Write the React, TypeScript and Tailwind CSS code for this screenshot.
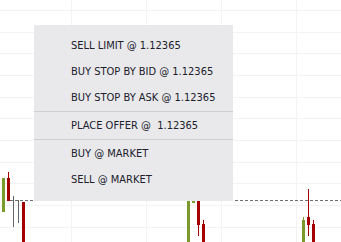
import React from 'react'

type Candle = { x: number; top: number; bottom: number; wickTop?: number; wickBottom?: number; color: string }

const GREEN = '#7a9a2c'
const RED = '#a50000'

const CANDLES: Candle[] = [
  { x: 2, top: 178, bottom: 212, color: GREEN },
  { x: 7, top: 178, bottom: 201, wickTop: 172, color: RED },
  { x: 22, top: 202, bottom: 242, color: RED },
  { x: 187, top: 195, bottom: 242, color: GREEN },
  { x: 192, top: 201, bottom: 203, color: GREEN },
  { x: 197, top: 195, bottom: 225, wickBottom: 236, color: RED },
  { x: 202, top: 224, bottom: 242, wickTop: 220, color: RED },
  { x: 302, top: 220, bottom: 242, wickTop: 217, color: GREEN },
  { x: 307, top: 217, bottom: 225, wickTop: 189, wickBottom: 236, color: RED },
  { x: 312, top: 224, bottom: 242, wickTop: 220, color: RED },
]

const H_LINES = [10, 32, 53, 75, 97, 118, 140, 162, 183, 205, 227]
const V_LINES = [71, 146, 221, 296]

function Chart() {
  return (
    <svg className="absolute inset-0" width={341} height={242} viewBox="0 0 341 242">
      {H_LINES.map((y) => (
        <rect key={`h${y}`} x={0} y={y} width={341} height={1} fill="#f3f3f3" />
      ))}
      {V_LINES.map((x) => (
        <rect key={`v${x}`} x={x} y={0} width={1} height={242} fill="#f3f3f3" />
      ))}
      <line x1={10} y1={200.5} x2={341} y2={200.5} stroke="#707070" strokeWidth={1} strokeDasharray="3 2" />
      <rect x={13} y={196} width={1} height={31} fill="#666" />
      <rect x={18} y={200} width={1} height={23} fill="#666" />
      {CANDLES.map((c, i) => (
        <g key={i} fill={c.color}>
          {c.wickTop !== undefined && <rect x={c.x + 1} y={c.wickTop} width={1} height={c.top - c.wickTop} />}
          {c.wickBottom !== undefined && <rect x={c.x + 1} y={c.bottom} width={1} height={c.wickBottom - c.bottom} />}
          <rect x={c.x} y={c.top} width={3} height={c.bottom - c.top} />
        </g>
      ))}
    </svg>
  )
}

function Item({ label }: { label: string }) {
  return (
    <div className="flex h-[26px] items-center whitespace-pre pl-[37px] text-[11px] text-[#20202c]">
      {label}
    </div>
  )
}

function Separator() {
  return <div className="mb-px h-px bg-[#cfcfd2]" />
}

export default function App() {
  return (
    <div className="relative h-[242px] w-[341px] overflow-hidden bg-white font-['DejaVu_Sans_Condensed','DejaVu_Sans',sans-serif]">
      <Chart />
      <div className="absolute left-[34px] top-[25px] flex h-[176px] w-[199px] flex-col bg-[#e9e9eb] py-2">
        <Item label="SELL LIMIT @ 1.12365" />
        <Item label="BUY STOP BY BID @ 1.12365" />
        <Item label="BUY STOP BY ASK @ 1.12365" />
        <Separator />
        <Item label="PLACE OFFER @  1.12365" />
        <Separator />
        <Item label="BUY @ MARKET" />
        <Item label="SELL @ MARKET" />
      </div>
    </div>
  )
}
